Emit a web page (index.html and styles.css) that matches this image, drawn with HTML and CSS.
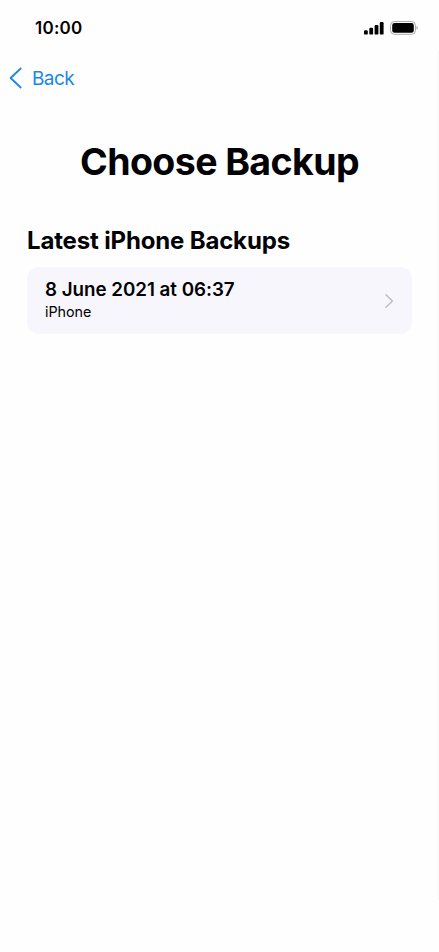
FILE: index.html
```html
<!DOCTYPE html>
<html lang="en">
<head>
<meta charset="utf-8">
<title>Choose Backup</title>
<link rel="stylesheet" href="styles.css">
</head>
<body>
<header class="status">
  <span class="time">10:00</span>
  <div class="indicators">
    <svg width="20" height="14" viewBox="0 0 20 14"><rect x="0" y="9.2" width="3.8" height="4.4" rx="1.2"/><rect x="5.3" y="6.8" width="3.8" height="6.8" rx="1.2"/><rect x="10.6" y="4" width="3.8" height="9.6" rx="1.2"/><rect x="15.8" y="1" width="3.8" height="12.6" rx="1.2"/></svg>
    <svg width="28" height="14" viewBox="0 0 28 14"><rect x=".5" y=".5" width="25" height="12.8" rx="4" fill="none" stroke="#aaa"/><rect x="2.2" y="2" width="21.6" height="9.8" rx="2.4"/><path d="M26.6 5c1.4.8 1.4 3 0 3.8z" fill="#888"/></svg>
  </div>
</header>
<nav class="nav"><a class="back"><svg width="13" height="22" viewBox="0 0 13 22"><path d="M11.7 1.5 1.6 11l10.1 9.5"/></svg><span>Back</span></a></nav>
<main>
  <h1>Choose Backup</h1>
  <h2>Latest iPhone Backups</h2>
  <div class="card">
    <div><div class="date">8 June 2021 at 06:37</div><div class="device">iPhone</div></div>
    <svg width="9" height="14" viewBox="0 0 9 14"><path d="M1 .8 7.4 7 1 13.2"/></svg>
  </div>
</main>
</body>
</html>
```
FILE: styles.css
```css
* { box-sizing: border-box; }
body { margin: 0; min-height: 952px; background: #fefefe linear-gradient(#f8f8f8, #f8f8f8) right 50px / 1px 850px no-repeat; color: #020204; font-family: Inter, sans-serif; }
svg { display: block; }
.status { height: 56px; padding: 0 21px 0 35px; display: flex; justify-content: space-between; align-items: center; }
.time { font-size: 17px; font-weight: 590; letter-spacing: 0.25px; }
.indicators { display: flex; gap: 6px; }
.nav { height: 44px; padding-left: 9px; display: flex; align-items: center; }
.back { display: flex; align-items: center; gap: 10px; color: #1c86e6; font-size: 19px; letter-spacing: -0.6px; }
.back path { fill: none; stroke: currentColor; stroke-width: 1.8; stroke-linecap: round; stroke-linejoin: round; }
main { padding: 38px 27px 0; }
h1 { margin: 0; text-align: center; font-size: 37.5px; line-height: 48px; font-weight: 660; letter-spacing: -0.6px; white-space: nowrap; }
h2 { margin: 40px 0 0; font-size: 24px; line-height: 30px; font-weight: 660; letter-spacing: -0.16px; }
.card { margin-top: 11px; height: 67px; border-radius: 12px; background: #f6f6fc; padding: 0 18px; display: flex; align-items: center; justify-content: space-between; }
.date { font-size: 18.8px; line-height: 24px; font-weight: 560; letter-spacing: -0.03px; }
.device { font-size: 14.3px; line-height: 20px; margin-bottom: 2px; }
.card path { fill: none; stroke: #bcbcc1; stroke-width: 1.4; stroke-linecap: round; }
```
